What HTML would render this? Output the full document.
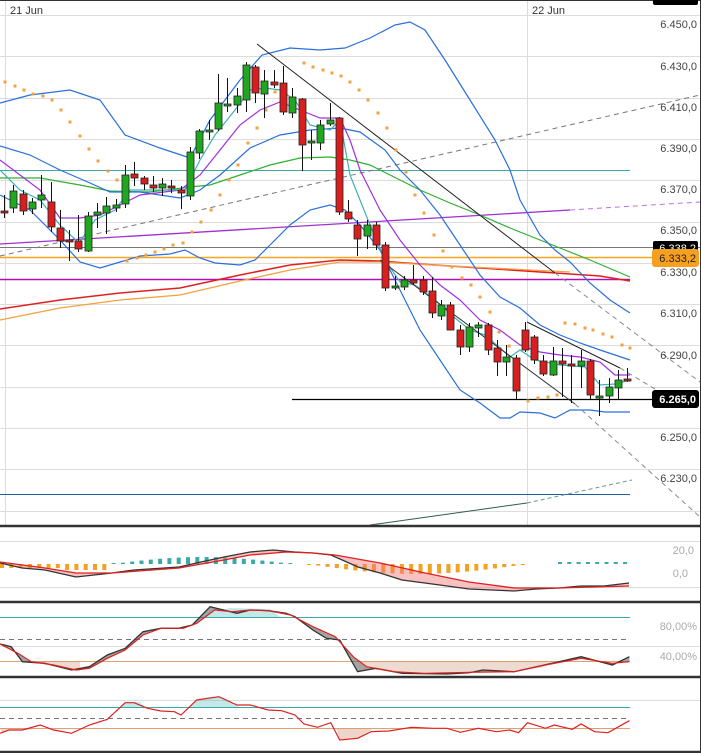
<!DOCTYPE html>
<html><head><meta charset="utf-8"><style>
html,body{margin:0;padding:0;background:#fff;}
svg{display:block;font-family:"Liberation Sans",sans-serif;}
</style></head><body>
<svg id="c" width="701" height="753" viewBox="0 0 701 753" xmlns="http://www.w3.org/2000/svg">
<rect width="701" height="753" fill="#fff"/>
<g id="grid" stroke="#dcdcdc" stroke-width="1"></g>
<line x1="5.5" y1="0" x2="5.5" y2="525" stroke="#dcdcdc"/>
<line x1="527.5" y1="0" x2="527.5" y2="525" stroke="#dcdcdc"/>
<line x1="0" y1="0.5" x2="701" y2="0.5" stroke="#333"/>
<line x1="700.5" y1="0" x2="700.5" y2="753" stroke="#333"/>
<text x="10" y="14" font-size="11" fill="#333">21 Jun</text>
<text x="532" y="14" font-size="11" fill="#333">22 Jun</text>
<g id="ind"></g>
<g id="cand"></g>
<g font-size="11" fill="#444" text-anchor="end">
<text x="697" y="28">6.450,0</text>
<text x="697" y="70">6.430,0</text>
<text x="697" y="111">6.410,0</text>
<text x="697" y="152">6.390,0</text>
<text x="697" y="193">6.370,0</text>
<text x="697" y="234">6.350,0</text>
<text x="697" y="276">6.330,0</text>
<text x="697" y="317">6.310,0</text>
<text x="697" y="359">6.290,0</text>
<text x="697" y="441">6.250,0</text>
<text x="697" y="482">6.230,0</text>
</g>
<rect x="653" y="-8" width="45" height="13" rx="2" fill="#000"/>
<rect x="653" y="241" width="45" height="12" rx="2" fill="#000"/>
<text x="696" y="252" font-size="11" fill="#fff" text-anchor="end">6.338,2</text>
<rect x="652" y="249" width="47" height="18" rx="3" fill="#f7a020"/>
<text x="696" y="262" font-size="11" fill="#222" text-anchor="end">6.333,2</text>
<rect x="652" y="390" width="47" height="18" rx="3" fill="#000"/>
<text x="696" y="403" font-size="11" font-weight="bold" fill="#fff" text-anchor="end">6.265,0</text>
<g stroke="#333" stroke-width="2.5">
<line x1="0" y1="526" x2="701" y2="526"/>
<line x1="0" y1="602" x2="701" y2="602"/>
<line x1="0" y1="677" x2="701" y2="677"/>
<line x1="0" y1="752" x2="701" y2="752"/>
</g>
<g font-size="11" fill="#aaa" text-anchor="end">
<text x="694" y="554">20,0</text>
<text x="688" y="577">0,0</text>
<text x="697" y="630">80,00%</text>
<text x="697" y="660">40,00%</text>
</g>
</svg>
<script>
var NS="http://www.w3.org/2000/svg";
function el(p,t,a){var e=document.createElementNS(NS,t);for(var k in a)e.setAttribute(k,a[k]);p.appendChild(e);return e;}
var G=document.getElementById('grid'),I=document.getElementById('ind'),C=document.getElementById('cand');
for(var i=0;i<13;i++){var y=Math.round(15+i*41.3)+.5;el(G,'line',{x1:0,y1:y,x2:700,y2:y});}
[541,587,646,700].forEach(function(y){el(G,'line',{x1:0,y1:y+.5,x2:700,y2:y+.5});});
function pl(pts,col,w,dash,fill){var s=pts.map(function(p){return p[0]+','+p[1]}).join(' ');var a={points:s,fill:fill||'none',stroke:col,'stroke-width':w||1};if(dash)a['stroke-dasharray']=dash;return el(I,'polyline',a);}
function ln(x1,y1,x2,y2,col,w,dash){var a={x1:x1,y1:y1,x2:x2,y2:y2,stroke:col,'stroke-width':w||1};if(dash)a['stroke-dasharray']=dash;el(I,'line',a);}
// horizontal lines
ln(0,170.5,630,170.5,'#3aa9a9');
ln(0,247.5,700,247.5,'#777');
ln(0,257.5,652,257.5,'#f5a623',1.5);
ln(0,279.5,630,279.5,'#b010b0',1.5);
ln(292,399.5,652,399.5,'#000',1.2);
ln(0,494.5,630,494.5,'#1a5fa0');
ln(370,525,527,503,'#2e5d4e');ln(527,503,632,480,'#6a9a8a',1,'4,3');
ln(0,256,700,95,'#777',1,'5,4');
ln(0,244,570,210,'#a030d0',1.3);ln(570,210,700,202,'#c070e0',1,'5,4');
// MAs
pl([[0,309],[60,300],[120,293],[180,288],[240,275],[290,265],[340,260],[380,261],[420,264],[480,268],[540,272],[600,276],[630,281]],'#e02020',1.5);
pl([[0,320],[60,308],[120,300],[180,295],[240,281],[290,270],[340,262],[380,262],[450,266],[530,270],[570,272]],'#f5a040',1.3);
pl([[0,178],[40,178],[80,185],[110,191],[150,192],[190,187],[210,185],[240,175],[270,165],[300,158],[330,157],[350,160],[370,165],[390,175],[420,190],[450,203],[480,215],[510,228],[540,240],[560,248],[590,260],[630,277]],'#30b030',1.2);
pl([[0,103],[30,95],[70,90],[100,100],[125,135],[160,148],[190,158],[210,120],[240,80],[262,55],[290,48],[320,50],[345,48],[370,38],[395,25],[410,22],[425,30],[445,60],[470,100],[495,140],[510,170],[520,200],[540,235],[555,250],[570,262],[590,283],[610,300],[630,313]],'#2a6fdb',1.2);
pl([[0,146],[30,155],[60,170],[90,183],[110,192],[140,192],[180,198],[200,190],[220,175],[250,148],[280,135],[310,130],[340,128],[360,132],[385,150],[400,170],[420,190],[440,215],[460,245],[480,275],[500,297],[520,308],[540,325],[560,335],[580,343],[600,350],[630,360]],'#2a6fdb',1.2);
pl([[0,195],[30,210],[60,240],[80,262],[100,268],[120,262],[140,256],[170,254],[185,250],[200,258],[215,263],[240,265],[255,260],[270,245],[290,225],[310,210],[330,205],[345,210],[360,225],[380,250],[400,290],[420,330],[440,360],[460,390],[480,403],[500,418],[510,418],[520,412],[540,413],[555,418],[570,410],[590,410],[605,412],[630,412]],'#2a6fdb',1.2);
pl([[0,160],[20,175],[40,190],[60,218],[80,218],[100,215],[120,205],[140,195],[180,190],[200,175],[220,150],[240,125],[260,110],[280,102],[300,110],[320,118],[340,118],[350,140],[360,170],[380,210],[400,240],[420,265],[440,285],[460,300],[480,320],[500,330],[520,345],[540,352],[560,355],[580,357],[600,362],[615,375],[630,375]],'#a030e0',1.2);
pl([[0,170],[20,190],[40,200],[60,225],[79,243],[95,220],[115,210],[130,190],[150,190],[185,190],[200,160],[215,135],[235,110],[250,90],[265,88],[280,90],[295,100],[310,125],[330,130],[340,120],[350,175],[360,200],[370,225],[385,260],[400,282],[415,285],[435,300],[455,318],[470,330],[485,335],[500,348],[510,357],[520,350],[535,360],[560,365],[585,367],[600,385],[615,384],[630,380]],'#40b0b0',1.2);
// trendlines
ln(257,44,555,273,'#222');ln(555,273,700,382,'#888',1,'5,4');
ln(380,260,575,404,'#333');ln(575,404,700,517,'#888',1,'5,4');
ln(527,322,620,368,'#222');ln(620,368,660,392,'#888',1,'5,4');
// SAR
var sar=[[5,82],[15,86],[24,90],[33,94],[43,96],[52,100],[61,110],[70,122],[80,136],[89,149],[98,161],[108,171],[117,180],[127,261],[137,258],[146,255],[155,252],[164,249],[173,245],[183,243],[192,232],[201,222],[211,210],[220,195],[229,180],[238,165],[248,143],[257,128],[266,110],[275,92],[304,63],[313,67],[323,70],[332,73],[341,76],[350,82],[359,90],[368,100],[378,113],[387,128],[396,150],[406,172],[415,195],[424,213],[434,235],[443,251],[452,267],[462,278],[471,285],[480,297],[490,312],[499,332],[509,346],[528,401],[538,398],[548,397],[557,395],[565,323],[575,324],[585,328],[593,330],[603,334],[612,337],[622,345],[630,348]];
sar.forEach(function(p){el(I,'rect',{x:p[0]-1.5,y:p[1]-1.5,width:3,height:3,fill:'#f5a040'});});
// candles [o,c,h,l] pixel y ; red if close lower (c>o)
var d=[[211,212,195,218,'r'],[208,191,185,213],[194,211,190,215,'r'],[209,202,198,214],[200,195,175,208],[202,227,182,232,'r'],[228,241,210,248,'r'],[240,242,230,261,'r'],[241,249,215,252,'r'],[251,216,212,252],[215,212,203,228],[213,206,197,234],[208,205,199,212],[204,175,165,208],[174,178,162,186,'r'],[178,184,176,190,'r'],[185,188,176,192,'r'],[188,184,178,196],[186,188,180,193,'r'],[190,193,186,209,'r'],[196,152,147,200],[153,131,129,159],[132,130,120,140],[129,103,74,131],[106,104,78,112],[105,96,88,113],[100,65,62,112],[67,93,65,103,'r'],[94,81,70,118],[82,85,70,88,'r'],[83,112,66,115,'r'],[113,97,88,118],[99,145,98,171,'r'],[143,141,130,160],[143,125,120,150],[124,120,103,126],[118,212,117,215,'r'],[212,219,200,222,'r'],[225,239,220,256,'r'],[236,225,220,249],[225,245,222,250,'r'],[245,288,242,291,'r'],[288,286,276,290],[287,280,276,290],[280,283,265,285,'r'],[280,292,276,295,'r'],[291,313,277,318,'r'],[316,305,300,320],[305,330,302,330,'r'],[330,347,325,355,'r'],[347,327,323,352],[328,325,322,337],[325,350,323,355,'r'],[348,362,340,376,'r'],[362,357,345,376],[358,391,355,400,'r'],[330,350,322,352,'r'],[337,360,335,364,'r'],[361,374,355,376,'r'],[375,361,347,376],[361,364,348,397,'r'],[364,366,355,403,'r'],[366,361,350,388],[361,395,359,400,'r'],[398,396,380,416],[396,387,378,403],[388,380,370,400],[379,381,368,382,'r']];
d.forEach(function(c,i){var x=Math.round(4+i*9.3);var red=c[4]==='r';var t=Math.min(c[0],c[1]),b=Math.max(c[0],c[1]);if(b-t<2)b=t+2;
el(C,'line',{x1:x+.5,y1:c[2],x2:x+.5,y2:c[3],stroke:'#111','stroke-width':1});
el(C,'rect',{x:x-3,y:t,width:7,height:b-t,fill:red?'#d81e1e':'#1fa81f',stroke:'#222','stroke-width':.8});});
// lower panels
function cv(a){return a.map(function(p){return [+(p[0]/2.237).toFixed(1),+(520+p[1]/3).toFixed(1)];});}
// MACD hist
for(var x=0;x<630;x+=9.3){var h=0,col;if(x<110){h=-(3+ (x>60?3:1));col='#f5a020';}else if(x<290){h=Math.max(1,7*Math.sin((x-110)/180*Math.PI));col='#3aa9a9';}else if(x>305&&x<525){h=-Math.max(1,10*Math.sin((x-305)/220*Math.PI));col='#f5a020';}else if(x>550){h=2;col='#3aa9a9';}else continue;
el(I,'rect',{x:x,y:h>0?564-h:564,width:4,height:Math.abs(h),fill:col});}
var mb=[[0,563],[22,568],[45,570],[76,577],[112,573],[134,570],[179,567],[201,562],[224,557],[250,552],[273,550],[295,552],[313,553],[331,555],[358,567],[380,573],[402,580],[425,583],[447,586],[469,589],[492,590],[514,591],[536,589],[559,588],[581,586],[604,586],[629,583]];
var ms=[[0,562],[45,568],[76,573],[112,573],[179,568],[224,560],[250,555],[286,552],[313,553],[335,555],[380,563],[425,573],[469,582],[514,588],[559,588],[629,586]];
pl(mb.concat(ms.slice().reverse()),'none',0,null,'rgba(240,120,120,0.45)');
pl(mb,'#333',1.3);pl(ms,'#e02020',1.3);
// stoch
ln(0,617.5,630,617.5,'#3aa9a9');ln(0,639.5,630,639.5,'#777',1,'5,4');ln(0,661.5,630,661.5,'#e0a070');
var sk=cv([[0,372],[25,380],[50,425],[100,430],[160,450],[200,440],[240,405],[280,385],[320,335],[360,325],[400,325],[430,315],[470,260],[500,270],[530,280],[560,270],[600,272],[640,280],[660,290],[700,330],[730,355],[760,360],[800,455],[840,445],[900,460],[1000,462],[1050,458],[1080,450],[1150,455],[1200,440],[1250,425],[1300,410],[1370,435],[1408,410]]);
var sd=cv([[0,372],[40,400],[70,425],[120,435],[170,450],[200,445],[240,415],[280,390],[320,345],[360,325],[410,325],[440,310],[480,270],[520,275],[560,270],[600,272],[650,285],[700,320],[750,350],[790,410],[820,440],[880,455],[950,460],[1050,457],[1150,455],[1220,435],[1300,415],[1370,430],[1408,425]]);
pl(sk.concat(sd.slice().reverse()),'none',0,null,'rgba(90,90,90,0.55)');
pl([[77,661],[77,661]].concat(sk.filter(function(p){return p[1]>661&&p[0]<110;})),'none');
el(I,'polygon',{points:'10,661 80,661 80,671 70,670 40,663',fill:'rgba(210,150,120,0.35)'});
el(I,'polygon',{points:'360,661 560,661 540,668 500,672 450,673 400,672 365,669',fill:'rgba(210,150,120,0.35)'});
el(I,'polygon',{points:'205,617 280,617 270,609 230,608 205,613',fill:'rgba(80,190,190,0.35)'});
pl(sk,'#333',1.3);pl(sd,'#e02020',1.2);
// RSI
ln(0,707.5,630,707.5,'#3aa9a9');ln(0,718.5,630,718.5,'#777',1,'5,4');ln(0,728.5,630,728.5,'#e0a070');
var r=cv([[0,640],[20,630],[50,630],[90,615],[120,630],[160,640],[200,615],[240,598],[280,548],[300,548],[330,565],[360,573],[390,575],[405,585],[440,540],[490,530],[530,555],[560,555],[600,570],[630,572],[660,585],[680,612],[710,622],[740,608],[760,660],[800,655],[830,635],[870,633],[920,622],[970,625],[1000,625],[1030,637],[1070,625],[1110,635],[1140,630],[1160,638],[1180,608],[1220,625],[1240,615],[1280,628],[1300,612],[1330,635],[1360,638],[1408,602]]);
el(I,'polygon',{points:'120,707 125,702 140,702 145,707',fill:'rgba(80,190,190,0.35)'});
el(I,'polygon',{points:'190,707 198,699 218,696 235,705 240,707',fill:'rgba(80,190,190,0.35)'});
el(I,'polygon',{points:'336,728 340,740 358,738 370,731 372,728',fill:'rgba(210,150,120,0.4)'});
el(I,'polygon',{points:'0,728 2,733 10,730 30,730 40,728',fill:'rgba(210,150,120,0.35)'});
pl(r,'#e02020',1.2);
</script>
</body></html>
